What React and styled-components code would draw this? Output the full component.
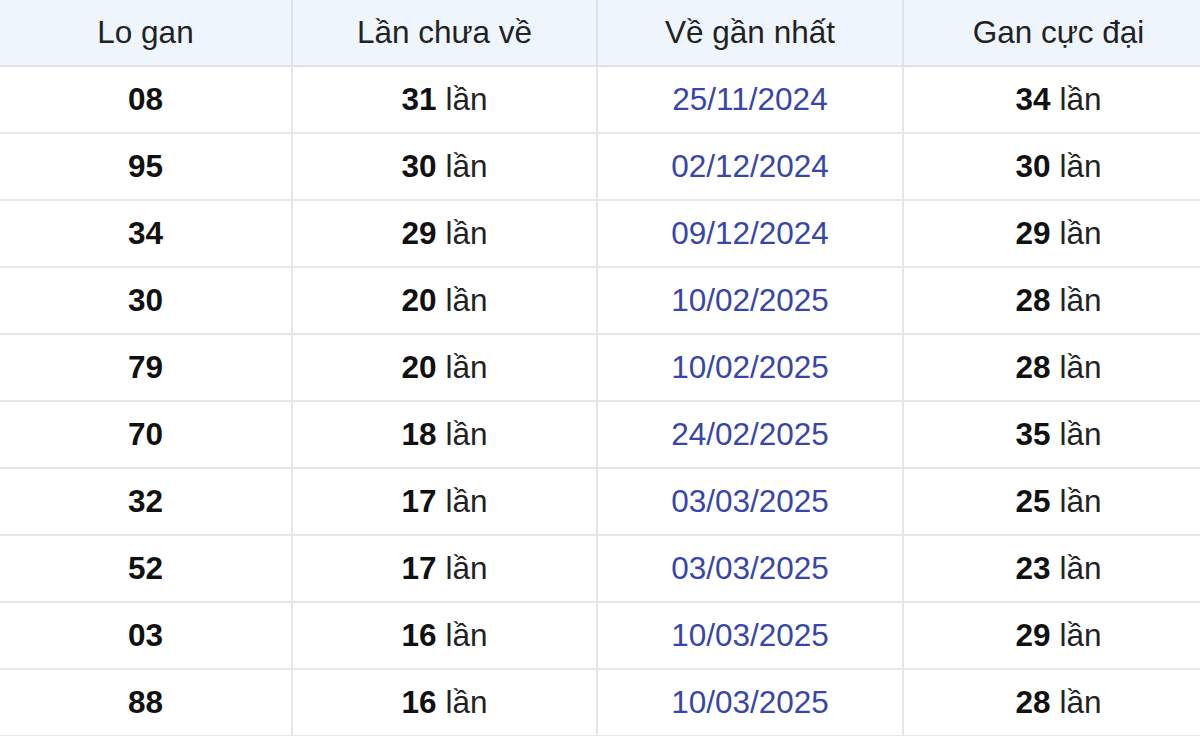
import styled, { createGlobalStyle } from 'styled-components';

const GlobalStyle = createGlobalStyle`
  body {
    margin: 0;
    background: #ffffff;
    overflow: hidden;
    font-family: "Liberation Sans", Arial, sans-serif;
  }
`;

// dữ liệu lô gan
const rows = [
  { lo: '08', chua: 31, ngay: '25/11/2024', max: 34 },
  { lo: '95', chua: 30, ngay: '02/12/2024', max: 30 },
  { lo: '34', chua: 29, ngay: '09/12/2024', max: 29 },
  { lo: '30', chua: 20, ngay: '10/02/2025', max: 28 },
  { lo: '79', chua: 20, ngay: '10/02/2025', max: 28 },
  { lo: '70', chua: 18, ngay: '24/02/2025', max: 35 },
  { lo: '32', chua: 17, ngay: '03/03/2025', max: 25 },
  { lo: '52', chua: 17, ngay: '03/03/2025', max: 23 },
  { lo: '03', chua: 16, ngay: '10/03/2025', max: 29 },
  { lo: '88', chua: 16, ngay: '10/03/2025', max: 28 },
];

const Table = styled.div`
  width: 1213px;
  display: grid;
  grid-template-columns: 293px 305px 306px 309px;
`;

const HeadCell = styled.div`
  height: 65px;
  display: flex;
  align-items: center;
  justify-content: center;
  background: #eef5fc;
  border-bottom: 2px solid #dfe3e8;
  border-right: ${(p) => (p.$last ? 'none' : '2px solid #dfe3e8')};
  color: #222;
  font-size: 31.5px;
`;

const Cell = styled.div`
  height: 65px;
  display: flex;
  align-items: center;
  justify-content: center;
  border-bottom: 2px solid #e4e6e9;
  border-right: ${(p) => (p.$last ? 'none' : '2px solid #e4e6e9')};
  color: ${(p) => (p.$date ? '#3746a8' : '#222')};
  font-size: 31.5px;
`;

const Num = styled.b`
  color: #111;
  font-weight: 700;
  margin-right: 9px;
`;

const Lo = styled.b`
  color: #111;
  font-weight: 700;
`;

export default function App() {
  return (
    <>
      <GlobalStyle />
      <Table>
        <HeadCell>Lo gan</HeadCell>
        <HeadCell>Lần chưa về</HeadCell>
        <HeadCell>Về gần nhất</HeadCell>
        <HeadCell $last>Gan cực đại</HeadCell>
        {rows.map((r) => (
          <Row key={r.lo} r={r} />
        ))}
      </Table>
    </>
  );
}

function Row({ r }) {
  return (
    <>
      <Cell><Lo>{r.lo}</Lo></Cell>
      <Cell><Num>{r.chua}</Num>lần</Cell>
      <Cell $date>{r.ngay}</Cell>
      <Cell $last><Num>{r.max}</Num>lần</Cell>
    </>
  );
}
